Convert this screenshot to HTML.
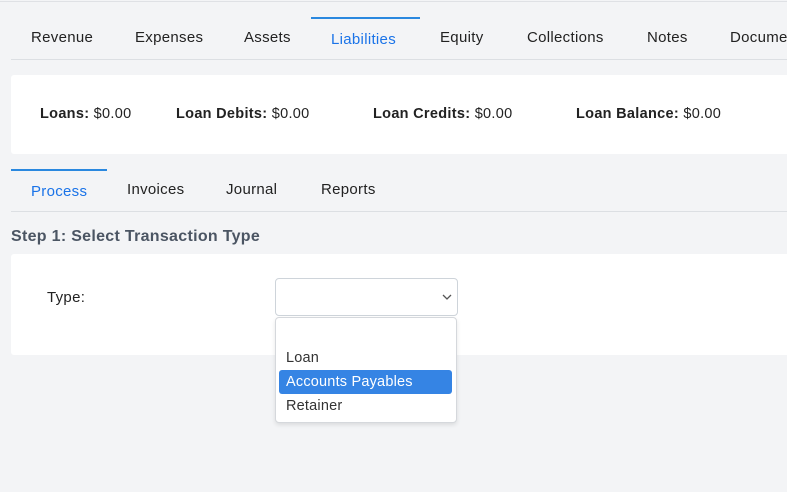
<!DOCTYPE html>
<html><head><style>
body{margin:0;width:787px;height:492px;background:#f3f4f6;font-family:"Liberation Sans",sans-serif;position:relative;overflow:hidden;color:#222}
.a{position:absolute;white-space:nowrap}
.t{font-size:15px;color:#222;letter-spacing:0.3px}
</style></head><body>
<div class="a" style="left:0;top:1px;width:787px;height:1px;background:#dfe1e5"></div>
<div class="a" style="left:311px;top:17px;width:109px;height:2px;background:#2a88df"></div>
<div class="a t" style="left:31px;top:29px">Revenue</div>
<div class="a t" style="left:135px;top:29px">Expenses</div>
<div class="a t" style="left:244px;top:29px">Assets</div>
<div class="a t" style="left:331px;top:31px;color:#1a73e8">Liabilities</div>
<div class="a t" style="left:440px;top:29px">Equity</div>
<div class="a t" style="left:527px;top:29px">Collections</div>
<div class="a t" style="left:647px;top:29px">Notes</div>
<div class="a t" style="left:730px;top:29px">Documents</div>
<div class="a" style="left:11px;top:59px;width:776px;height:1px;background:#dcdfe3"></div>
<div class="a" style="left:11px;top:75px;width:790px;height:79px;background:#fff;border-radius:3px"></div>
<div class="a t" style="left:40px;top:106px;font-size:14.5px"><b>Loans:</b> $0.00</div>
<div class="a t" style="left:176px;top:106px;font-size:14.5px"><b>Loan Debits:</b> $0.00</div>
<div class="a t" style="left:373px;top:106px;font-size:14.5px"><b>Loan Credits:</b> $0.00</div>
<div class="a t" style="left:576px;top:106px;font-size:14.5px"><b>Loan Balance:</b> $0.00</div>
<div class="a" style="left:11px;top:169px;width:96px;height:2px;background:#2a88df"></div>
<div class="a t" style="left:31px;top:183px;color:#1a73e8">Process</div>
<div class="a t" style="left:127px;top:181px">Invoices</div>
<div class="a t" style="left:226px;top:181px">Journal</div>
<div class="a t" style="left:321px;top:181px">Reports</div>
<div class="a" style="left:11px;top:211px;width:776px;height:1px;background:#dcdfe3"></div>
<div class="a" style="left:11px;top:228px;font-size:16px;font-weight:bold;color:#4b5563;letter-spacing:0.3px">Step 1: Select Transaction Type</div>
<div class="a" style="left:11px;top:254px;width:790px;height:101px;background:#fff;border-radius:3px"></div>
<div class="a t" style="left:47px;top:289px">Type:</div>
<div class="a" style="left:275px;top:278px;width:181px;height:36px;border:1px solid #ced4da;border-radius:4px;background:#fff"></div>
<svg class="a" style="left:442px;top:293px" width="10" height="8"><path d="M1 2 L5 6 L9 2" fill="none" stroke="#555" stroke-width="1.3"/></svg>
<div class="a" style="left:275px;top:317px;width:180px;height:104px;border:1px solid #d5d8dc;border-radius:4px;background:#fff;box-shadow:0 2px 4px rgba(0,0,0,.1)"></div>
<div class="a" style="left:286px;top:350px;font-size:14.5px;color:#333;letter-spacing:0.2px">Loan</div>
<div class="a" style="left:279px;top:370px;width:173px;height:24px;background:#3584e4;border-radius:3px"></div>
<div class="a" style="left:286px;top:374px;font-size:14.5px;color:#fff;letter-spacing:0.2px">Accounts Payables</div>
<div class="a" style="left:286px;top:398px;font-size:14.5px;color:#333;letter-spacing:0.2px">Retainer</div>
</body></html>
